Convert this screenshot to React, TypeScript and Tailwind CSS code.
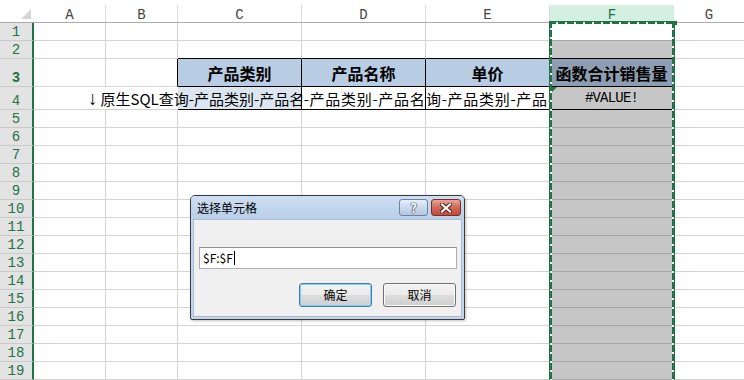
import React from 'react'

const COLS = ['A', 'B', 'C', 'D', 'E', 'F', 'G']

function RowHead({ n }: { n: number }) {
  return (
    <div className="w-[34px] shrink-0 flex items-end justify-center bg-[#e3e3e3] border-b border-r-2 border-b-[#cacaca] border-r-[#217346] font-['Liberation_Mono',monospace] text-[14px] leading-[16px] text-[#217346]">
      {n}
    </div>
  )
}

function PlainRow({ n }: { n: number }) {
  return (
    <div className="flex h-[18px] shrink-0">
      <RowHead n={n} />
      <div className="w-[72px] shrink-0 border-r border-b border-[#d4d4d4]" />
      <div className="w-[72px] shrink-0 border-r border-b border-[#d4d4d4]" />
      <div className="w-[124px] shrink-0 border-r border-b border-[#d4d4d4]" />
      <div className="w-[124px] shrink-0 border-r border-b border-[#d4d4d4]" />
      <div className="w-[124px] shrink-0 border-r border-b border-[#d4d4d4]" />
      <div className="w-[124px] shrink-0 border-r border-b border-[#a5a5a5] bg-[#c6c6c6]" />
      <div className="flex-1 border-b border-[#d4d4d4]" />
    </div>
  )
}

function HeaderRow() {
  return (
    <div className="flex h-[23px] shrink-0 border-b border-[#ababab] font-['Liberation_Mono',monospace] text-[14px] leading-none text-[#444]">
      <div className="w-[34px] shrink-0 flex items-end justify-end pr-[3px] pb-[3px]">
        <svg width="10" height="10" viewBox="0 0 10 10">
          <polygon points="10,0 10,10 0,10" fill="#d6d6d6" />
        </svg>
      </div>
      {COLS.map((c) => {
        if (c === 'F')
          return (
            <div key={c} className="w-[124px] shrink-0 mt-[5px] pt-[2px] flex items-center justify-center bg-[#d3f0e0] text-[#217346]">
              {c}
            </div>
          )
        if (c === 'G')
          return (
            <div key={c} className="flex-1 mt-[5px] pt-[2px] flex items-center justify-center">
              {c}
            </div>
          )
        return (
          <div
            key={c}
            className={
              c === 'A' || c === 'B'
                ? 'w-[72px] shrink-0 mt-[5px] pt-[2px] flex items-center justify-center border-r border-[#dadada]'
                : 'w-[124px] shrink-0 mt-[5px] pt-[2px] flex items-center justify-center border-r border-[#dadada]'
            }
          >
            {c}
          </div>
        )
      })}
    </div>
  )
}

function MarchingAnts() {
  return (
    <div className="absolute left-[549px] top-[21px] w-[126px] h-[360px] pointer-events-none">
      <div className="absolute left-0 right-0 top-0 h-[3px] border-t border-[#217346] bg-[repeating-linear-gradient(90deg,#217346_0px,#217346_7px,#ffffff_7px,#ffffff_9px)]" />
      <div className="absolute left-0 top-0 bottom-0 w-[3px] border-l border-[#217346] bg-[repeating-linear-gradient(180deg,#217346_0px,#217346_7px,#ffffff_7px,#ffffff_9px)]" />
      <div className="absolute right-0 top-0 bottom-0 w-[3px] border-r border-[#217346] bg-[repeating-linear-gradient(180deg,#217346_0px,#217346_7px,#ffffff_7px,#ffffff_9px)]" />
      <div className="absolute right-[-2px] top-0 w-[4px] h-[4px] bg-[#217346]" />
    </div>
  )
}

function Dialog() {
  return (
    <div className="absolute left-[190px] top-[195px] w-[275px] h-[125px] flex flex-col rounded-t-[5px] rounded-b-[2px] border border-[#3a3a3a] bg-[#c3d6ec] shadow-[1px_1px_3px_rgba(0,0,0,0.25)] font-['Noto_Sans_CJK_SC',sans-serif]">
      <div className="h-[23px] shrink-0 flex items-center pl-[6px] pr-[3px] rounded-t-[4px] bg-gradient-to-b from-[#cddef1] to-[#b9cfe9]">
        <span className="text-[12px] leading-none text-black">选择单元格</span>
        <div className="ml-auto flex gap-[3px]">
          <div className="w-[29px] h-[17px] rounded-[3px] border border-[#6a82a3] bg-gradient-to-b from-[#e6eef8] via-[#cbd9eb] to-[#b3c7e0] flex items-center justify-center text-[13px] font-bold leading-none text-white [text-shadow:0_0_1px_#1d2c44,0_0_1px_#1d2c44,0_0_1px_#1d2c44]">
            ?
          </div>
          <div className="w-[30px] h-[17px] rounded-[3px] border border-[#7a2c24] bg-gradient-to-b from-[#e9a597] via-[#cf6a57] to-[#c1493b] flex items-center justify-center">
            <svg width="12" height="10" viewBox="0 0 12 10">
              <path d="M2 1.5 L10 8.5 M10 1.5 L2 8.5" stroke="#4a1a14" strokeWidth="4" strokeLinecap="square" />
              <path d="M2 1.5 L10 8.5 M10 1.5 L2 8.5" stroke="#ffffff" strokeWidth="2.2" strokeLinecap="square" />
            </svg>
          </div>
        </div>
      </div>
      <div className="flex-1 mx-[2px] mb-[2px] bg-[#f0f0f0] border border-[#a9bdd6] flex flex-col px-[5px] pt-[27px]">
        <div className="w-[258px] h-[22px] bg-white border border-[#abadb3] border-t-[#8e8f8f] flex items-center pl-[3px] text-[12px] leading-none text-black">
          $F:$F<span className="inline-block w-[1px] h-[14px] bg-black ml-[1px]" />
        </div>
        <div className="mt-[14px] flex justify-end gap-[11px]">
          <div className="w-[73px] h-[24px] rounded-[3px] border border-[#3c7fb1] shadow-[inset_0_0_0_1px_#7fd0f5] bg-[linear-gradient(180deg,#f2f2f2_0%,#ebebeb_50%,#dddddd_50%,#cfcfcf_100%)] flex items-center justify-center text-[12px] leading-none text-black">
            确定
          </div>
          <div className="w-[73px] h-[24px] rounded-[3px] border border-[#707070] shadow-[inset_0_0_0_1px_#fbfbfb] bg-[linear-gradient(180deg,#f2f2f2_0%,#ebebeb_50%,#dddddd_50%,#cfcfcf_100%)] flex items-center justify-center text-[12px] leading-none text-black">
            取消
          </div>
        </div>
      </div>
    </div>
  )
}

export default function App() {
  return (
    <div className="relative w-[744px] h-[380px] overflow-hidden bg-white flex flex-col font-['Noto_Sans_CJK_SC',sans-serif]">
      <HeaderRow />

      {/* row 1: F1 is the active cell */}
      <div className="flex h-[18px] shrink-0">
        <RowHead n={1} />
        <div className="w-[72px] shrink-0 border-r border-b border-[#d4d4d4]" />
        <div className="w-[72px] shrink-0 border-r border-b border-[#d4d4d4]" />
        <div className="w-[124px] shrink-0 border-r border-b border-[#d4d4d4]" />
        <div className="w-[124px] shrink-0 border-r border-b border-[#d4d4d4]" />
        <div className="w-[124px] shrink-0 border-r border-b border-[#d4d4d4]" />
        <div className="w-[124px] shrink-0 border-r border-b border-[#a5a5a5] bg-white" />
        <div className="flex-1 border-b border-[#d4d4d4]" />
      </div>

      {/* row 2 */}
      <div className="flex h-[18px] shrink-0">
        <RowHead n={2} />
        <div className="w-[72px] shrink-0 border-r border-b border-[#d4d4d4]" />
        <div className="w-[72px] shrink-0 border-r border-b border-[#d4d4d4]" />
        <div className="w-[124px] shrink-0 border-r border-b border-[#d4d4d4] border-b-black" />
        <div className="w-[124px] shrink-0 border-r border-b border-[#d4d4d4] border-b-black" />
        <div className="w-[124px] shrink-0 border-r border-b border-[#d4d4d4] border-b-black" />
        <div className="w-[124px] shrink-0 border-r border-b border-[#a5a5a5] border-b-black bg-[#c6c6c6]" />
        <div className="flex-1 border-b border-[#d4d4d4]" />
      </div>

      {/* row 3: table header */}
      <div className="flex h-[28px] shrink-0 text-[16px] font-bold text-black">
        <RowHead n={3} />
        <div className="w-[72px] shrink-0 border-r border-b border-[#d4d4d4]" />
        <div className="w-[72px] shrink-0 border-r border-b border-[#d4d4d4] border-r-black" />
        <div className="w-[124px] shrink-0 flex items-center justify-center bg-[#b8cce4] border-r border-b border-black">产品类别</div>
        <div className="w-[124px] shrink-0 flex items-center justify-center bg-[#b8cce4] border-r border-b border-black">产品名称</div>
        <div className="w-[124px] shrink-0 flex items-center justify-center bg-[#b8cce4] border-r border-b border-black">单价</div>
        <div className="w-[124px] shrink-0 flex items-center justify-center bg-[#8d9db2] border-r border-b border-black">函数合计销售量</div>
        <div className="flex-1 border-b border-[#d4d4d4]" />
      </div>

      {/* row 4: query result, text overflows its cells */}
      <div className="flex h-[23px] shrink-0 text-[15px] leading-none text-black">
        <RowHead n={4} />
        <div className="w-[72px] shrink-0 border-r border-b border-[#d4d4d4] border-r-white" />
        <div className="w-[72px] shrink-0 border-r border-b border-[#d4d4d4] border-r-white" />
        <div className="w-[124px] shrink-0 relative bg-[#dce6f1] border-r border-b border-black">
          <div className="absolute left-[-90px] right-0 top-0 bottom-0 overflow-hidden flex items-center whitespace-nowrap">
            <span className="font-['Liberation_Sans',sans-serif] text-[19px] mr-[3px]">↓</span>
            原生SQL查询-产品类别-产品名称
          </div>
        </div>
        <div className="w-[124px] shrink-0 overflow-hidden flex items-center whitespace-nowrap bg-white border-r border-b border-black tracking-[0.7px]">
          <span className="shrink-0 ml-[-14px]">询-产品类别-产品名称</span>
        </div>
        <div className="w-[124px] shrink-0 overflow-hidden flex items-center whitespace-nowrap bg-white border-r border-b border-black tracking-[0.7px]">
          <span className="shrink-0">询-产品类别-产品名称</span>
        </div>
        <div className="w-[124px] shrink-0 relative flex items-center justify-center bg-[#c6c6c6] border-r border-b border-black font-['Liberation_Mono',monospace] text-[14px] tracking-[-0.8px]">
          <svg className="absolute left-[1px] top-0" width="6" height="6" viewBox="0 0 6 6">
            <polygon points="0,0 6,0 0,6" fill="#217346" />
          </svg>
          #VALUE!
        </div>
        <div className="flex-1 border-b border-[#d4d4d4]" />
      </div>

      {Array.from({ length: 15 }, (_, i) => (
        <PlainRow key={i} n={i + 5} />
      ))}

      <MarchingAnts />
      <Dialog />
    </div>
  )
}
